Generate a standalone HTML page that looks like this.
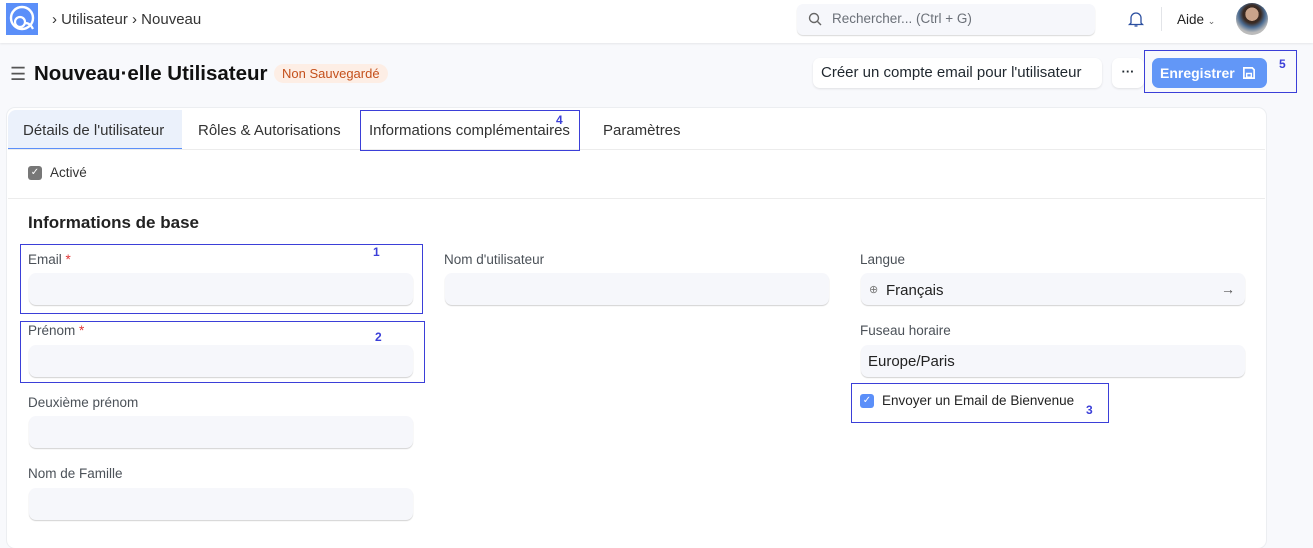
<!DOCTYPE html>
<html><head><meta charset="utf-8"><style>
*{box-sizing:border-box;margin:0;padding:0}
body{width:1313px;height:538px;overflow:hidden;background:#f8f9fc;font-family:"Liberation Sans",sans-serif;color:#1f272e;position:relative;font-size:13px}
.a{position:absolute}
.hdr{left:0;top:0;width:1313px;height:43px;background:#fff;box-shadow:0 1px 2px rgba(0,0,0,.08)}
.inp{position:absolute;height:32px;background:#f6f7fb;border-radius:7px;box-shadow:0 1px 1px rgba(0,0,0,.18)}
.lbl{position:absolute;font-size:13.5px;color:#4b5158}
.box{position:absolute;border:1px solid #3b3fd8}
.num{position:absolute;color:#3b3fd8;font-size:12px;font-weight:bold}
.btn{position:absolute;background:#fff;border-radius:7px;box-shadow:0 1px 2px rgba(0,0,0,.1);font-size:15px;color:#1f272e}
.tab{position:absolute;top:122px;font-size:15px;color:#333}
</style></head><body>
<div class="a hdr"></div>
<div class="a" style="left:6px;top:3px;width:32px;height:32px;background:#5b8ff9"><svg width="32" height="32" viewBox="0 0 32 32"><circle cx="16" cy="15" r="11" fill="none" stroke="#fff" stroke-width="2.4"/><circle cx="14" cy="19" r="5" fill="none" stroke="#fff" stroke-width="2.2"/><path d="M19 20 C23 20 25 22 27 26" stroke="#fff" stroke-width="2.2" fill="none"/></svg></div>
<div class="a" style="left:52px;top:11px;font-size:15px;color:#333">›&nbsp;Utilisateur&nbsp;›&nbsp;Nouveau</div>
<div class="a" style="left:797px;top:4px;width:298px;height:31px;background:#f6f7fb;border-radius:6px;box-shadow:0 1px 1px rgba(0,0,0,.15)"></div>
<svg class="a" style="left:808px;top:12px" width="14" height="14" viewBox="0 0 14 14"><circle cx="6" cy="6" r="4.5" fill="none" stroke="#666" stroke-width="1.4"/><path d="M9.5 9.5L13 13" stroke="#666" stroke-width="1.4"/></svg>
<div class="a" style="left:832px;top:11px;font-size:13.5px;color:#6b7078">Rechercher... (Ctrl + G)</div>
<svg class="a" style="left:1127px;top:10px" width="18" height="18" viewBox="0 0 18 18"><path d="M4 13V8a5 5 0 0 1 10 0v5l1.5 1.5h-13z M7.5 16h3" fill="none" stroke="#2b4fa0" stroke-width="1.3"/></svg>
<div class="a" style="left:1161px;top:7px;width:1px;height:24px;background:#e2e4e8"></div>
<div class="a" style="left:1177px;top:12px;font-size:13.5px;color:#222">Aide <span style="font-size:9px;color:#666">⌄</span></div>
<div class="a" style="left:1236px;top:3px;width:32px;height:32px;border-radius:50%;background:radial-gradient(circle at 50% 35%,#c9a38a 0 25%,#3a2a22 26% 34%,#4a6a90 50%,#bbb 70%)"></div>

<div class="a" style="left:10px;top:64px;font-size:18px;color:#555">☰</div>
<div class="a" style="left:34px;top:62px;font-size:20.5px;font-weight:bold;color:#111">Nouveau·elle Utilisateur</div>
<div class="a" style="left:274px;top:64px;height:19px;padding:0 8px;background:#fdeee5;border-radius:10px;color:#c4501c;font-size:13px;line-height:19px">Non Sauvegardé</div>
<div class="btn" style="left:813px;top:58px;width:289px;height:30px;line-height:30px;padding-left:8px">Créer un compte email pour l'utilisateur</div>
<div class="btn" style="left:1112px;top:58px;width:32px;height:30px;line-height:28px;text-align:center;font-weight:bold;font-size:13px">···</div>
<div class="a" style="left:1152px;top:58px;width:115px;height:30px;background:#6297f7;border-radius:7px;color:#fff;font-weight:bold;font-size:14px;line-height:30px;padding-left:8px">Enregistrer</div>
<svg class="a" style="left:1242px;top:66px" width="14" height="14" viewBox="0 0 15 15"><path d="M2 2h9l2 2v9H2z" fill="none" stroke="#fff" stroke-width="1.8"/><rect x="5" y="8" width="5" height="4" fill="none" stroke="#fff" stroke-width="1.5"/></svg>
<div class="box" style="left:1144px;top:50px;width:153px;height:43px"></div>
<div class="num" style="left:1279px;top:57px">5</div>

<div class="a" style="left:7px;top:108px;width:1259px;height:440px;background:#fff;border-radius:8px;box-shadow:0 0 0 1px #eceef1"></div>
<div class="a" style="left:8px;top:110px;width:174px;height:40px;background:#ebf1fb;border-bottom:2px solid #5b8ff9;border-top-left-radius:8px"></div>
<div class="a" style="left:8px;top:149px;width:1257px;height:1px;background:#ececec"></div>
<div class="tab" style="left:23px">Détails de l'utilisateur</div>
<div class="tab" style="left:198px">Rôles &amp; Autorisations</div>
<div class="tab" style="left:369px">Informations complémentaires</div>
<div class="tab" style="left:603px">Paramètres</div>
<div class="box" style="left:360px;top:110px;width:220px;height:41px"></div>
<div class="num" style="left:556px;top:113px">4</div>

<div class="a" style="left:28px;top:166px;width:14px;height:14px;background:#777;border-radius:3px;color:#fff;font-size:10px;text-align:center;line-height:14px">✓</div>
<div class="a" style="left:50px;top:165px;font-size:13.5px;color:#333">Activé</div>
<div class="a" style="left:8px;top:198px;width:1257px;height:1px;background:#ececec"></div>
<div class="a" style="left:28px;top:213px;font-size:17px;font-weight:bold;color:#222">Informations de base</div>

<div class="lbl" style="left:28px;top:252px">Email <span style="color:#e03636">*</span></div>
<div class="inp" style="left:29px;top:273px;width:384px"></div>
<div class="box" style="left:20px;top:244px;width:403px;height:70px"></div>
<div class="num" style="left:373px;top:245px">1</div>
<div class="lbl" style="left:28px;top:323px">Prénom <span style="color:#e03636">*</span></div>
<div class="inp" style="left:29px;top:345px;width:384px"></div>
<div class="box" style="left:20px;top:321px;width:405px;height:62px"></div>
<div class="num" style="left:375px;top:330px">2</div>
<div class="lbl" style="left:28px;top:395px">Deuxième prénom</div>
<div class="inp" style="left:29px;top:416px;width:384px"></div>
<div class="lbl" style="left:28px;top:466px">Nom de Famille</div>
<div class="inp" style="left:29px;top:488px;width:384px"></div>

<div class="lbl" style="left:444px;top:252px">Nom d'utilisateur</div>
<div class="inp" style="left:445px;top:273px;width:384px"></div>

<div class="lbl" style="left:860px;top:252px">Langue</div>
<div class="inp" style="left:861px;top:273px;width:384px"></div>
<div class="a" style="left:869px;top:283px;font-size:11px;color:#777">⊕</div>
<div class="a" style="left:886px;top:282px;font-size:15px;color:#222">Français</div>
<div class="a" style="left:1221px;top:281px;font-size:14px;color:#555">→</div>
<div class="lbl" style="left:860px;top:323px">Fuseau horaire</div>
<div class="inp" style="left:861px;top:345px;width:384px"></div>
<div class="a" style="left:868px;top:353px;font-size:15px;color:#222">Europe/Paris</div>
<div class="a" style="left:860px;top:394px;width:14px;height:14px;background:#5b8ff9;border-radius:3px;color:#fff;font-size:10px;text-align:center;line-height:14px">✓</div>
<div class="a" style="left:882px;top:393px;font-size:13.5px;color:#222">Envoyer un Email de Bienvenue</div>
<div class="box" style="left:851px;top:383px;width:258px;height:40px"></div>
<div class="num" style="left:1086px;top:403px">3</div>
</body></html>
